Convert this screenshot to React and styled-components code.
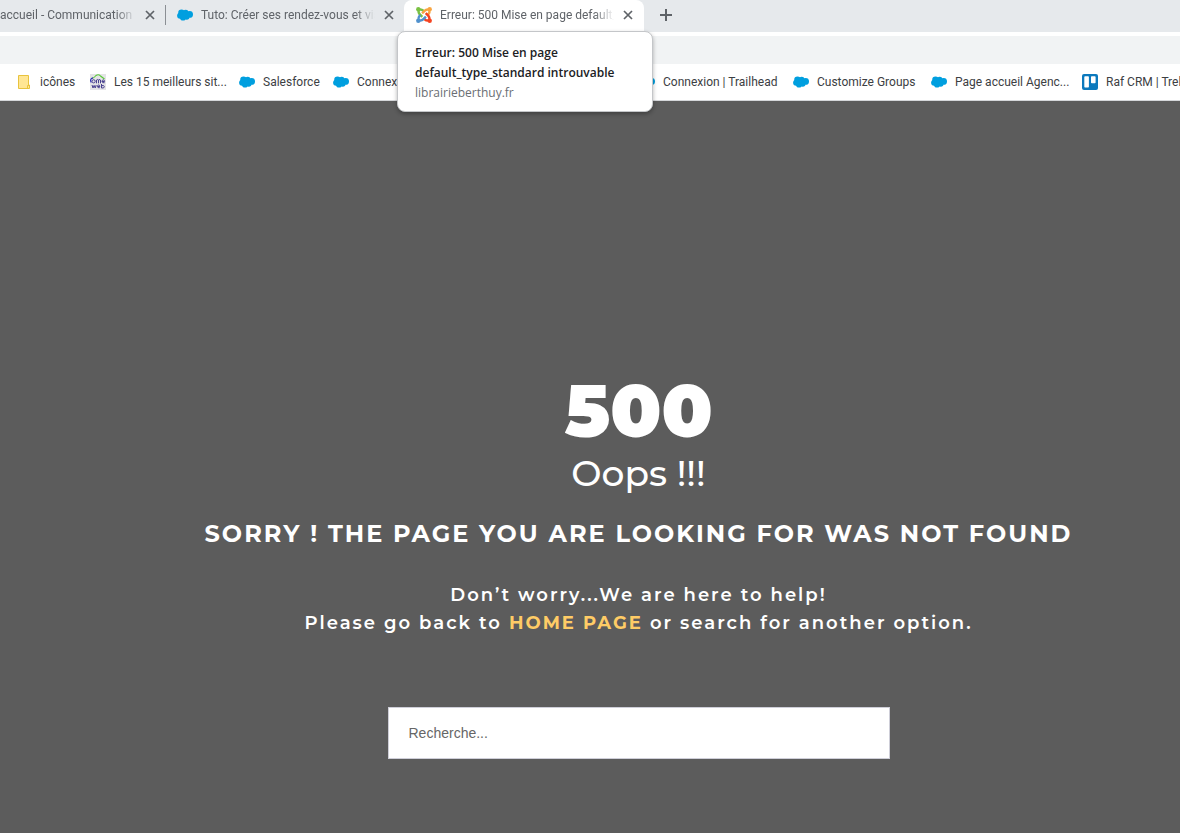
import React from 'react';
import styled, { createGlobalStyle } from 'styled-components';

const GlobalStyle = createGlobalStyle`
  * {
    box-sizing: border-box;
  }
  body {
    margin: 0;
    background: #5c5c5c;
    overflow-x: hidden;
  }
`
const Page = styled.div`
  display: flex;
  flex-direction: column;
  min-height: 100vh;
  overflow: hidden;
  font-family: Roboto, 'Open Sans', sans-serif;
  font-size: 12px;
`
const TabStrip = styled.div`
  display: flex;
  height: 32px;
  background: #e6e9ec;
`
const Tab = styled.div`
  position: relative;
  display: flex;
  align-items: center;
  flex: none;
  gap: 8px;
  width: ${props => props.$width}px;
  height: 32px;
  padding: 0 ${props => props.$active ? '10px 2px 12px' : '9px 2px 11px'};
  padding-left: ${props => props.$first && 0};
  color: #5f6368;
  background: ${props => props.$active ? '#fff' : 'transparent'};
  border-radius: ${props => props.$active ? '8px 8px 0 0' : '0'};
`
const TabTitle = styled.span`
  flex: 1;
  min-width: 0;
  overflow: hidden;
  white-space: nowrap;
  line-height: 20px;
  mask-image: linear-gradient(to right, #000 calc(100% - 20px), transparent);
`
const Divider = styled.span`
  width: 1px;
  height: 20px;
  margin-top: 5px;
  background: #8b8f94;
`
const IconButton = styled.button`
  display: flex;
  align-items: center;
  justify-content: center;
  flex: none;
  width: ${props => props.$size}px;
  height: ${props => props.$size}px;
  padding: 0;
  border: 0;
  color: #5f6368;
  background: transparent;
`
const NewTab = styled.div`
  padding: 1px 8px;
`
const Tooltip = styled.div`
  position: absolute;
  z-index: 2;
  top: 31px;
  left: -7px;
  width: 256px;
  padding: 11px 17px 8px;
  border: 1px solid #c4c6c9;
  border-radius: 8px;
  background: #fff;
  box-shadow: 0 2px 4px rgba(0, 0, 0, 0.3);
  font-family: 'Open Sans', 'Noto Sans', sans-serif;
  line-height: 20px;
`
const TooltipTitle = styled.div`
  color: #202124;
  font-weight: 600;
`
const TooltipHost = styled.div`
  color: #6a6e73;
`
const Toolbar = styled.div`
  padding-top: 4px;
  background: #fff;
`
const Address = styled.input`
  display: block;
  width: 100%;
  height: 28px;
  border: 0;
  background: #f1f3f4;
`
const Bookmarks = styled.nav`
  display: flex;
  align-items: center;
  height: 37px;
  padding-left: 16px;
  border-bottom: 1px solid #d5d7da;
  background: #fff;
`
const Bookmark = styled.a`
  display: flex;
  align-items: center;
  flex: none;
  gap: 8px;
  width: ${props => props.$width}px;
  color: #3c4043;
  line-height: 20px;
  text-decoration: none;
  white-space: nowrap;
`
const Main = styled.main`
  display: flex;
  flex-direction: column;
  align-items: center;
  flex: 1;
  padding: 270px 0 74px 97px;
  color: #fff;
  background: #5c5c5c;
  font-family: Montserrat, Inter, sans-serif;
  text-align: center;
`
const Code = styled.h1`
  margin: 0;
  font-size: 74px;
  font-weight: 900;
  line-height: 80px;
`
const Oops = styled.p`
  margin: 0;
  font-size: 36px;
  font-weight: 500;
  line-height: 44px;
`
const Sorry = styled.h2`
  margin: 24px 0 32px;
  font-size: 24px;
  font-weight: 700;
  line-height: 30px;
  letter-spacing: 2px;
`
const Help = styled.p`
  margin: 0;
  font-size: 18px;
  font-weight: 600;
  line-height: 28px;
  letter-spacing: 2px;
`
const HomeLink = styled.a`
  color: #ffcc66;
  font-weight: 700;
  text-decoration: none;
`
const Search = styled.input`
  width: 502px;
  max-width: 90%;
  height: 52px;
  margin-top: 70px;
  padding: 0 20px;
  border: 1px solid #ceced8;
  border-radius: 0;
  background: #fff;
  color: #555;
  font-family: 'Liberation Sans', Arial, sans-serif;
  font-size: 14px;
  &::placeholder {
    color: #666;
    opacity: 1;
  }
`
const Icon = styled.svg`
  flex: none;
  display: block;
`

const Cloud = () => (
  <Icon width="16" height="16" viewBox="0 0 16 16" fill="#009fdf">
    <circle cx="4.5" cy="5.9" r="3.3" />
    <circle cx="8.7" cy="5.5" r="2.8" />
    <circle cx="12.6" cy="7.4" r="3.4" />
    <circle cx="3.1" cy="8.7" r="3" />
    <circle cx="6" cy="10.4" r="3.1" />
    <circle cx="9.7" cy="10" r="2.8" />
  </Icon>
)

const Folder = () => (
  <Icon width="16" height="16" viewBox="0 0 16 16">
    <path d="M2.5 1.5h10v9.5h1v3.5h-11z" fill="#ffe694" stroke="#e8c33e" />
    <path d="M11.5 14v-2.5h1.5" fill="none" stroke="#e8c33e" />
  </Icon>
)

const HomeWeb = () => (
  <Icon width="16" height="16" viewBox="0 0 16 16">
    <path d="M0 0h16v16H0z" fill="#e4e4e6" />
    <path d="M2 4.5Q4.5 3.5 6 1.5Q8.5-.2 10.5 2L14.5 5" fill="none" stroke="#58c837" strokeWidth="1.1" />
    <path d="M1.3 8.5Q-.7 5 3 3.9" fill="none" stroke="#3030b8" strokeWidth="1.2" />
    <g fill="none" stroke="#4a4290" strokeWidth="1">
      <circle cx="3.6" cy="7.3" r="1.6" />
      <path d="M6.5 9.3V6q1.5-1 2 0v3.3M8.5 6q2-1 2 0v3.3M12 7.5h2.6q-.2-1.8-1.3-1.7-1.3.2-1.3 1.7.2 1.7 2.6 1.2" />
      <path d="M2 11l1 3 1.1-2.6 1.1 2.6 1-3M7.5 12.5h2.4q-.3-1.6-1.3-1.5-1.2.1-1.2 1.5.1 1.7 2.4 1.2M11.5 10v4q2.8.4 2.8-1.3 0-1.7-2.8-1.1" />
    </g>
  </Icon>
)

const Trello = () => (
  <Icon width="16" height="16" viewBox="0 0 16 16">
    <rect width="16" height="16" rx="2" fill="#0c79bd" />
    <rect x="2.3" y="2.2" width="4.6" height="11.3" rx="0.8" fill="#fff" />
    <rect x="9" y="2.2" width="4.6" height="7" rx="0.8" fill="#fff" />
  </Icon>
)

const joomlaArms = [
  { color: '#7ac143', angle: 0 },
  { color: '#f9a541', angle: 90 },
  { color: '#f44321', angle: 180 },
  { color: '#5091cd', angle: 270 }
]

const Joomla = () => (
  <Icon width="16" height="16" viewBox="0 0 16 16">
    {joomlaArms.map(arm => (
      <g key={arm.color} transform={`rotate(${arm.angle} 8 8)`}>
        <circle cx="2.3" cy="2.3" r="2.2" fill={arm.color} />
        <path
          d="M2.8 2.6Q2 5.6 3.8 7.4L6.3 9.9M2.8 2.6Q5.6 2 7.3 3.7L8 4.4"
          fill="none"
          stroke={arm.color}
          strokeWidth="2.4"
        />
      </g>
    ))}
  </Icon>
)

const Close = () => (
  <IconButton $size={12} aria-label="Fermer l'onglet">
    <Icon width="10" height="10" viewBox="0 0 10 10" stroke="currentColor" strokeWidth="1.7">
      <path d="M1 1l8 8M9 1l-8 8" />
    </Icon>
  </IconButton>
)

const bookmarks = [
  { label: 'icônes', icon: Folder, width: 74 },
  { label: 'Les 15 meilleurs sit...', icon: HomeWeb, width: 149 },
  { label: 'Salesforce', icon: Cloud, width: 94 },
  { label: 'Connexion', icon: Cloud, width: 306 },
  { label: 'Connexion | Trailhead', icon: Cloud, width: 154 },
  { label: 'Customize Groups', icon: Cloud, width: 138 },
  { label: 'Page accueil Agenc...', icon: Cloud, width: 151 },
  { label: 'Raf CRM | Trello', icon: Trello, width: 130 }
]

class ErrorPage extends React.Component {
  state = {
    userInput: ''
  }
  handleSearch = (e) => {
    this.setState({ userInput: e.target.value })
  }
  drawBookmarks = () => {
    return bookmarks.map(item => (
      <Bookmark key={item.label} href="#" $width={item.width}>
        <item.icon />
        {item.label}
      </Bookmark>
    ))
  }
  render() {
    return (
      <Page>
        <GlobalStyle />
        <TabStrip>
          <Tab $width={165} $first>
            <TabTitle>accueil - Communication</TabTitle>
            <Close />
          </Tab>
          <Divider />
          <Tab $width={238}>
            <Cloud />
            <TabTitle>Tuto: Créer ses rendez-vous et vis</TabTitle>
            <Close />
          </Tab>
          <Tab $width={240} $active>
            <Joomla />
            <TabTitle>Erreur: 500 Mise en page default_</TabTitle>
            <Close />
            <Tooltip role="tooltip">
              <TooltipTitle>Erreur: 500 Mise en page default_type_standard introuvable</TooltipTitle>
              <TooltipHost>librairieberthuy.fr</TooltipHost>
            </Tooltip>
          </Tab>
          <NewTab>
            <IconButton $size={28} aria-label="Nouvel onglet">
              <Icon width="12" height="12" viewBox="0 0 12 12" stroke="currentColor" strokeWidth="2">
                <path d="M6 0v12M0 6h12" />
              </Icon>
            </IconButton>
          </NewTab>
        </TabStrip>
        <Toolbar>
          <Address type="text" aria-label="Adresse" />
        </Toolbar>
        <Bookmarks>{this.drawBookmarks()}</Bookmarks>
        <Main>
          <Code>500</Code>
          <Oops>Oops !!!</Oops>
          <Sorry>SORRY ! THE PAGE YOU ARE LOOKING FOR WAS NOT FOUND</Sorry>
          <Help>
            Don’t worry...We are here to help!<br />
            Please go back to <HomeLink href="#">HOME PAGE</HomeLink> or search for another option.
          </Help>
          <Search
            type="search"
            aria-label="Recherche"
            placeholder="Recherche..."
            value={this.state.userInput}
            onChange={this.handleSearch}
          />
        </Main>
      </Page>
    )
  }
}

export default ErrorPage;
